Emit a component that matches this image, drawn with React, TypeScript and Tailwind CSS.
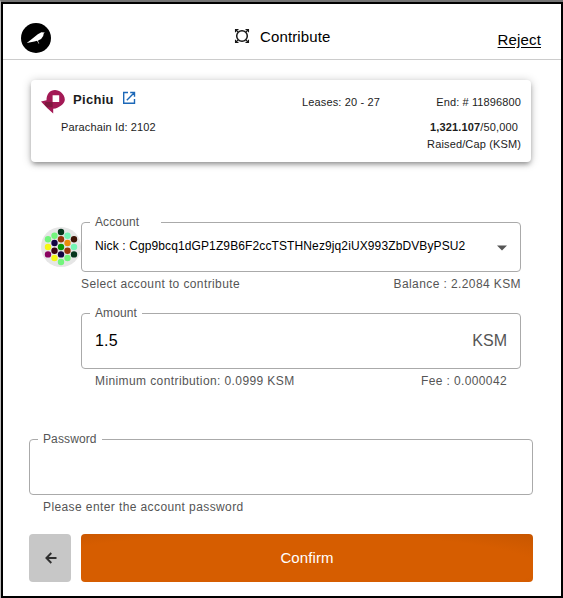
import type { ReactNode } from "react";

const dots: [number, number, string][] = [
  [20, 6, "#04361c"],
  [13.5, 9.7, "#72f57c"], [26.5, 9.7, "#74f5b4"],
  [7, 13.3, "#72f57c"], [20, 13.3, "#96350a"], [33, 13.3, "#3d1203"],
  [13.5, 17, "#120442"], [26.5, 17, "#e88c0c"],
  [7, 21, "#f5f714"], [20, 21, "#0a9806"], [33, 21, "#74f5b4"],
  [13.5, 24.7, "#3d0412"], [26.5, 24.7, "#96350a"],
  [7, 28.4, "#8a0260"], [20, 28.4, "#120442"], [33, 28.4, "#04361c"],
  [13.5, 32, "#f5f714"], [26.5, 32, "#72f57c"],
  [20, 36, "#72f57c"],
];

function Identicon() {
  return (
    <svg width="40" height="42" viewBox="0 0 40 42" className="shrink-0">
      <circle cx="20" cy="21" r="20" fill="#e6e6e6" />
      {dots.map(([x, y, color], i) => (
        <circle key={i} cx={x} cy={y} r="3.2" fill={color} />
      ))}
    </svg>
  );
}

function Outlined({ label, labelClass, className, children }: {
  label: string; labelClass: string; className: string; children?: ReactNode;
}) {
  return (
    <div className={`relative flex items-center justify-between rounded-[4px] border border-[#aaaaaa] ${className}`}>
      <span className={`absolute left-2 -top-[9px] h-[17px] bg-white pl-[5px] text-[12px] leading-[17px] text-[#555] whitespace-nowrap ${labelClass}`}>
        {label}
      </span>
      {children}
    </div>
  );
}

export default function App() {
  return (
    <div className="h-[598px] w-[563px] border-t-2 border-l border-t-[#747474] border-l-[#bcbcbc] bg-white font-['Liberation_Sans',Arial,sans-serif] text-[#1c1c1c]">
      <div className="flex h-[596px] flex-col border-2 border-black">
        <header className="grid h-[56px] shrink-0 grid-cols-[213px_1fr_auto] border-b border-[#cccccc] pl-[18px] pr-[20px]">
          <svg width="30" height="30" viewBox="0 0 30 30" className="mt-[19px]">
            <circle cx="15" cy="15" r="15" fill="#000" />
            <path d="M5.8 20 11.8 15.3l5-4.1 3.6-2 3.4.2-1.1 1.2-.5 2.5-2.1 2.8-3 1.6.1 1.3 1.1 1.7-.7-.1-1.5-2.6-2.7.6Z" fill="#fff" />
          </svg>
          <div className="flex h-[66px] items-center text-[15px] tracking-[0.12px] text-black">
            <svg width="16" height="16" viewBox="0 0 16 16" fill="none" stroke="#161616" className="-mt-[2px] mr-[10px]">
              <circle cx="8" cy="8" r="5.3" strokeWidth="1.5" />
              <path d="M1.5 4.3V1.6H4.5M11.5 1.6h3V4.3M14.5 11.7v2.7H11.5M4.5 14.4H1.5V11.7M1.8 1.9l2.1 2.1M14.2 1.9l-2.1 2.1M14.2 14.1l-2.1-2.1M1.8 14.1l2.1-2.1" strokeWidth="1.1" />
            </svg>
            Contribute
          </div>
          <a className="mt-[26px] h-[20px] text-[15px] leading-[19px] tracking-[0.15px] text-black underline underline-offset-[2px]">Reject</a>
        </header>

        <section className="ml-[28px] mt-[20px] flex h-[82px] w-[500px] shrink-0 rounded-[4px] bg-white text-[11px] shadow-[0_3px_5px_-1px_rgba(0,0,0,0.35),0_1px_10px_rgba(0,0,0,0.22)]">
          <div className="w-[271px] pl-[10px] pt-[9px]">
            <div className="flex h-[24px] items-start">
              <svg width="25" height="25" viewBox="0 0 25 25">
                <path fillRule="evenodd" d="M0 12.6 5.5 11.2C5.5 5 9 1 14 1c4.5 0 9.8 4.2 9.8 9.4 0 3.8-4 7-9.3 9.2L12.2 19.8V24.6L6.4 19.3ZM11.6 6.3v6.6h6.6V6.3Z" fill="#a31955" />
                <path d="M4.5 12.9h7.1v5.4H6.2L3.6 15.8Z" fill="#7d183e" />
              </svg>
              <b className="ml-[7px] mt-px text-[13px] leading-[19px] tracking-[0.3px]">Pichiu</b>
              <svg width="14" height="14" viewBox="0 0 14 14" fill="none" stroke="#1c68b8" strokeWidth="1.4" className="ml-[8px] mt-[2px]">
                <path d="M6 1.5H1.7v10.8h10.8V8M8.2 1.5h4.3v4.3M12.2 1.8 4.8 9.2" />
              </svg>
            </div>
            <div className="ml-[20px] mt-[6px] leading-[16px] tracking-[0.14px]">Parachain Id: 2102</div>
          </div>
          <div className="w-[100px] pt-[14px] leading-[16px] tracking-[0.14px]">Leases: 20 - 27</div>
          <div className="flex-1 pr-[10px] pt-[14px] text-right leading-[16px] tracking-[0.12px]">
            <div>End: # 11896800</div>
            <div className="mt-[9px] pr-[3px] tracking-[0.15px]"><b>1,321.107</b>/50,000</div>
            <div className="mt-[1px] tracking-[0.14px]">Raised/Cap (KSM)</div>
          </div>
        </section>

        <section className="ml-[38px] mt-[60px] flex h-[50px] shrink-0">
          <div className="pt-[4px]"><Identicon /></div>
          <Outlined label="Account" labelClass="w-[71px] tracking-[0.12px]" className="h-[50px] w-[440px] pl-[13px] pr-[12px]">
            <span className="mb-[2px] whitespace-nowrap text-[12px] tracking-[0.115px] text-black">
              Nick : Cgp9bcq1dGP1Z9B6F2ccTSTHNez9jq2iUX993ZbDVByPSU2
            </span>
            <svg width="12" height="6" viewBox="0 0 12 6" className="mt-[2px]"><path d="M1 .5h10L6 5.5Z" fill="#555" /></svg>
          </Outlined>
        </section>
        <div className="ml-[78px] mt-[3px] flex h-[18px] w-[440px] shrink-0 justify-between text-[12px] leading-[18px] text-[#555]">
          <span className="tracking-[0.39px]">Select account to contribute</span>
          <span className="tracking-[0.4px]">Balance : 2.2084 KSM</span>
        </div>

        <Outlined label="Amount" labelClass="w-[52px] tracking-[0.12px]" className="ml-[78px] mt-[20px] h-[56px] w-[440px] shrink-0 px-[13px] text-[16px]">
          <span className="tracking-[0.2px] text-black">1.5</span>
          <span className="text-[#555]">KSM</span>
        </Outlined>
        <div className="ml-[92px] mt-[3px] flex h-[18px] w-[412px] shrink-0 justify-between text-[12px] leading-[18px] text-[#555]">
          <span className="tracking-[0.4px]">Minimum contribution: 0.0999 KSM</span>
          <span className="tracking-[0.37px]">Fee : 0.000042</span>
        </div>

        <Outlined label="Password" labelClass="w-[64px] tracking-[0.12px]" className="ml-[26px] mt-[49px] h-[56px] w-[504px] shrink-0" />
        <div className="ml-[40px] mt-[3px] h-[18px] shrink-0 text-[12px] leading-[18px] tracking-[0.4px] text-[#555]">
          Please enter the account password
        </div>

        <div className="ml-[26px] mt-[18px] flex h-[48px] shrink-0 gap-[10px]">
          <button className="flex w-[42px] items-center justify-center rounded-[4px] bg-[#c7c7c7]">
            <svg width="12" height="12" viewBox="0 0 12 12" fill="none" stroke="#303030" strokeWidth="1.9" className="-mt-px ml-px">
              <path d="M11.5 6H1.5M6.3 1 1.4 6l4.9 5" />
            </svg>
          </button>
          <button className="w-[452px] rounded-[4px] bg-[radial-gradient(ellipse_at_45%_70%,#d65d00_72%,#c75600_100%)] text-[15px] tracking-[0.1px] text-white">
            Confirm
          </button>
        </div>
      </div>
    </div>
  );
}
